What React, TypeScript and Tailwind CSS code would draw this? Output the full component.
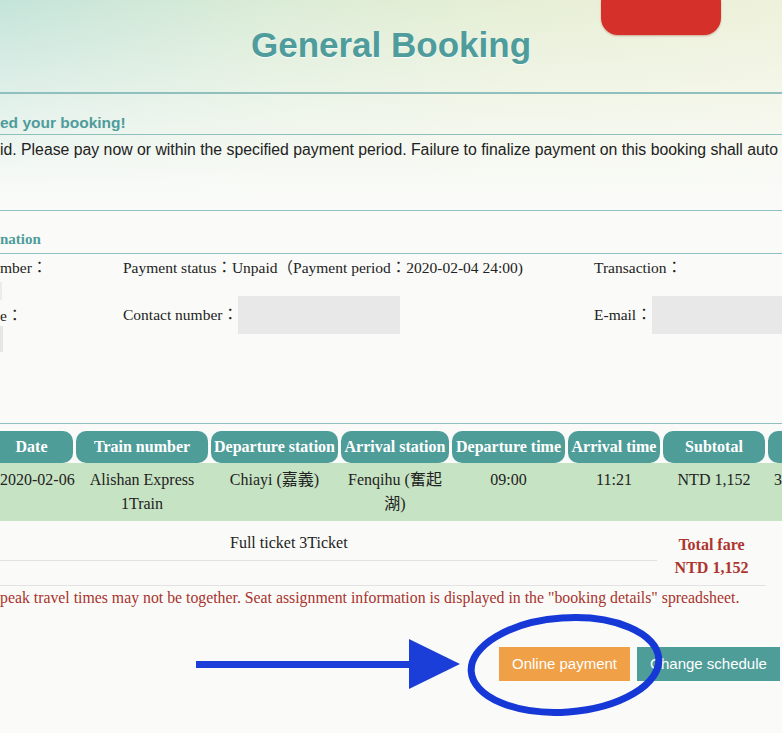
import React from "react";

const serif = "font-['Liberation_Serif','Noto_Sans_CJK_TC',serif]";
const sans = "font-['Liberation_Sans','Noto_Sans_CJK_TC',sans-serif]";

function HeadCell({ w, children, first, last }: { w: string; children?: React.ReactNode; first?: boolean; last?: boolean }) {
  const r = first ? "rounded-r-[10px] pr-[10px]" : last ? "rounded-l-[10px]" : "rounded-[10px]";
  return (
    <div className={`${w} ${r} shrink-0 h-[32px] bg-[#4f9d99] text-white font-bold text-[16px] leading-[32px] text-center whitespace-nowrap`}>
      {children}
    </div>
  );
}

function DataCell({ w, children }: { w: string; children?: React.ReactNode }) {
  return (
    <div className={`${w} shrink-0 text-center text-[16px] leading-[24px] pt-[5px] px-[4px] text-[#222]`}>{children}</div>
  );
}

export default function App() {
  return (
    <div className="w-[782px] h-[733px] overflow-hidden bg-[linear-gradient(180deg,rgba(250,251,248,0)_0px,rgba(250,251,248,0.6)_110px,#fafbf8_200px),linear-gradient(90deg,#c4e4da_0%,#dbecd6_35%,#e6efd5_65%,#eef1da_100%)]">
      {/* Header */}
      <div className="relative h-[94px] border-b-2 border-[#8fc0bd]">
        <div className="absolute left-[601px] top-0 w-[120px] h-[35px] bg-[#d5302a] rounded-b-[17px] shadow-[0_1px_2px_rgba(150,60,40,0.4)]" />
        <div className={`${sans} pt-[25px] text-center text-[35px] leading-[40px] font-bold text-[#4e9c9b] [text-shadow:0_1px_1px_rgba(255,255,255,0.9)]`}>
          General Booking
        </div>
      </div>

      {/* Notice */}
      <div className={`${sans} pt-[19px] pb-[1px] border-b border-[#8fc0bd] text-[15.5px] leading-[20px] font-bold text-[#4e9c9b] whitespace-nowrap`}>
        ed your booking!
      </div>
      <div className={`${sans} mt-[5px] h-[71px] border-b border-[#8fc0bd] text-[15.8px] leading-[20px] text-[#222] whitespace-nowrap`}>
        id. Please pay now or within the specified payment period. Failure to finalize payment on this booking shall auto
      </div>

      {/* Info */}
      <div className={`${serif} pt-[18px] pb-[4px] border-b border-[#8fc0bd] text-[15px] leading-[20px] font-bold text-[#4e9c9b] whitespace-nowrap`}>
        nation
      </div>
      <div className={`${serif} h-[170px] border-b border-[#8fc0bd] flex text-[15.5px] text-[#222] whitespace-nowrap`}>
        <div className="w-[123px] shrink-0 flex flex-col">
          <div className="mt-[4px] leading-[20px]">mber：</div>
          <div className="mt-[4px] w-[2px] h-[18px] bg-[#ececec]" />
          <div className="mt-[6px] leading-[20px]">e：</div>
          <div className="w-[3px] h-[26px] bg-[#e6e6e6]" />
        </div>
        <div className="w-[471px] shrink-0 flex flex-col">
          <div className="mt-[4px] leading-[20px]">Payment status：Unpaid（Payment period：2020-02-04 24:00)</div>
          <div className="mt-[18px] h-[38px] flex items-center">
            <span>Contact number：</span>
            <div className="w-[162px] h-[38px] bg-[#e8e8e8]" />
          </div>
        </div>
        <div className="w-[300px] shrink-0 flex flex-col">
          <div className="mt-[4px] leading-[20px]">Transaction：</div>
          <div className="mt-[18px] h-[38px] flex items-center">
            <span>E-mail：</span>
            <div className="w-[200px] h-[38px] bg-[#e8e8e8]" />
          </div>
        </div>
      </div>

      {/* Table */}
      <div className={`${serif} mt-[7px]`}>
        <div className="flex gap-[3px] w-[900px]">
          <HeadCell w="w-[73px]" first>Date</HeadCell>
          <HeadCell w="w-[132px]">Train number</HeadCell>
          <HeadCell w="w-[127px]">Departure station</HeadCell>
          <HeadCell w="w-[108px]">Arrival station</HeadCell>
          <HeadCell w="w-[113px]">Departure time</HeadCell>
          <HeadCell w="w-[92px]">Arrival time</HeadCell>
          <HeadCell w="w-[102px]">Subtotal</HeadCell>
          <HeadCell w="w-[100px]" last />
        </div>
        <div className="flex gap-[3px] w-[900px] h-[58px] bg-[#c6e3c3]">
          <div className="w-[73px] shrink-0 pt-[5px] text-[16px] leading-[24px] text-[#222] whitespace-nowrap">2020-02-06</div>
          <DataCell w="w-[132px]">Alishan Express 1Train</DataCell>
          <DataCell w="w-[127px]">Chiayi (嘉義)</DataCell>
          <DataCell w="w-[108px]">Fenqihu (奮起湖)</DataCell>
          <DataCell w="w-[113px]">09:00</DataCell>
          <DataCell w="w-[92px]">11:21</DataCell>
          <DataCell w="w-[102px]">NTD 1,152</DataCell>
          <div className="shrink-0 pl-[6px] pt-[5px] text-[16px] leading-[24px] text-[#222]">3</div>
        </div>
        <div className="w-[766px] h-[65px] border-b border-[#e2e2e2] flex">
          <div className="w-[657px] h-[40px] border-b border-[#e2e2e2] pl-[230px] pt-[5px] flex items-center text-[16px] text-[#222] whitespace-nowrap">
            Full ticket 3Ticket
          </div>
          <div className="flex-1 pt-[12px] text-center text-[16px] leading-[23px] font-bold text-[#ad3530]">
            <div>Total fare</div>
            <div>NTD 1,152</div>
          </div>
        </div>
        <div className="mt-[2px] text-[15.8px] leading-[20px] text-[#a8322d] whitespace-nowrap">
          peak travel times may not be together. Seat assignment information is displayed in the "booking details" spreadsheet.
        </div>
      </div>

      {/* Buttons */}
      <div className={`${sans} relative mt-[39px] pl-[499px] flex gap-[7px] text-white text-[15px]`}>
        <div className="w-[131px] h-[34px] bg-[#f0a046] flex items-center justify-center">Online payment</div>
        <div className="w-[143px] h-[34px] bg-[#4f9d99] flex items-center justify-center whitespace-nowrap">Change schedule</div>
        <svg className="absolute left-0 top-[-34px] w-[782px] h-[110px] pointer-events-none" viewBox="0 0 782 110">
          <rect x="196" y="48" width="218" height="7" fill="#1b3ed8" />
          <polygon points="409,26 460,51 409,76" fill="#1b3ed8" />
          <ellipse cx="565" cy="52" rx="94" ry="47" fill="none" stroke="#1638d6" strokeWidth="7" transform="rotate(-4 565 52)" />
        </svg>
      </div>
    </div>
  );
}
